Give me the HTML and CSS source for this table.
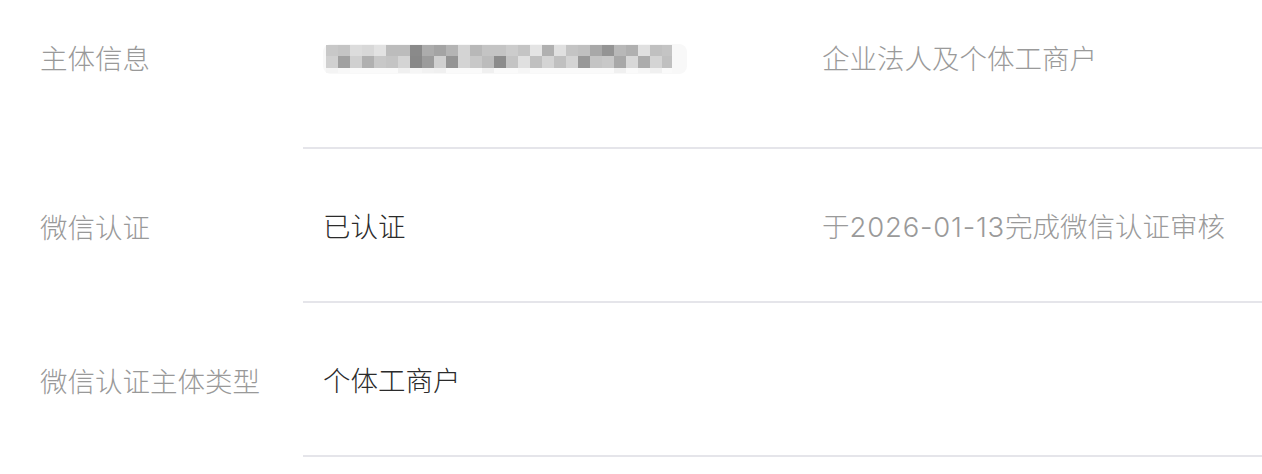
FILE: index.html
```html
<!DOCTYPE html>
<html>
<head>
  <meta charset="utf-8">
  <link rel="stylesheet" href="styles.css">
</head>
<body>
  <div class="info-list">
    <div class="info-row first">
      <div class="info-label">主体信息</div>
      <div class="info-body">
        <div class="info-value">
          <svg class="mosaic" width="364" height="32" viewBox="0 0 364 32">
            <rect x="0" y="0" width="364" height="30" rx="8" fill="#f8f8f8"/>
            <g id="row1"></g>
            <g id="row2"></g>
            <g id="row3"></g>
          </svg>
        </div>
        <div class="info-note">企业法人及个体工商户</div>
      </div>
    </div>
    <div class="info-row">
      <div class="info-label">微信认证</div>
      <div class="info-body">
        <div class="info-value">已认证</div>
        <div class="info-note">于<span class="num">2026-01-13</span>完成微信认证审核</div>
      </div>
    </div>
    <div class="info-row">
      <div class="info-label">微信认证主体类型</div>
      <div class="info-body">
        <div class="info-value">个体工商户</div>
        <div class="info-note"></div>
      </div>
    </div>
  </div>
  <script>
    // blurred company name, drawn as mosaic blocks
    var rows = [
      ["c8","c4","dc","d8","e2","bc","bc","8a","ac","a4","b4","d4","b8","c4","c4","cc","c4","e4","b0","e0","c4","c0","a8","94","b8","b0","e0","c0","c4"],
      ["d0","a0","d0","b0","c8","c4","d4","88","9c","d0","94","d4","c8","bc","8c","c4","e0","c0","d4","c0","d4","98","c4","c8","a8","d8","ac","d4","c0"],
      ["f4","f8","fa","fa","fa","fa","f0","f6","f2","f0","fa","fa","fa","f0","fa","fa","f6","fa","fa","fa","fa","fa","fa","fa","f0","fa","f6","f0","fa"]
    ];
    var heights = [11, 12, 5];
    var ys = [1, 12, 24];
    var ns = "http://www.w3.org/2000/svg";
    for (var r = 0; r < rows.length; r++) {
      var g = document.getElementById("row" + (r + 1));
      for (var i = 0; i < rows[r].length; i++) {
        var rect = document.createElementNS(ns, "rect");
        rect.setAttribute("x", 3 + i * 12);
        rect.setAttribute("y", ys[r]);
        rect.setAttribute("width", i == rows[r].length - 1 ? 10 : 12);
        rect.setAttribute("height", heights[r]);
        rect.setAttribute("fill", "#" + rows[r][i] + rows[r][i] + rows[r][i]);
        g.appendChild(rect);
      }
    }
  </script>
</body>
</html>
```

FILE: styles.css
```css
body {
  margin: 0;
  background: #ffffff;
  font-family: Inter, "Noto Sans CJK SC", "Noto Sans", sans-serif;
  font-size: 27.5px;
  font-weight: 300;
}

/* one row: label on the left, value + note on the right */
.info-row {
  display: flex;
  height: 154px;
}

.info-row.first {
  height: 149px;
}

.info-label {
  width: 303px;
  padding-left: 40px;
  box-sizing: border-box;
  color: #999999;
  display: flex;
  align-items: center;
}

.info-body {
  flex: 1;
  display: flex;
  align-items: center;
  border-bottom: 2px solid #e5e5ea;
}

.info-row.first .info-label {
  padding-bottom: 36px;
}

.info-row.first .info-body {
  padding-bottom: 34px;
}

.info-value {
  width: 519px;
  padding-left: 20px;
  box-sizing: border-box;
  color: #2b2b2b;
  display: flex;
  align-items: center;
}

.info-note {
  color: #9a9a9a;
}

.num {
  letter-spacing: 0.8px;
}

.mosaic {
  display: block;
  margin-top: 6px;
}
```
